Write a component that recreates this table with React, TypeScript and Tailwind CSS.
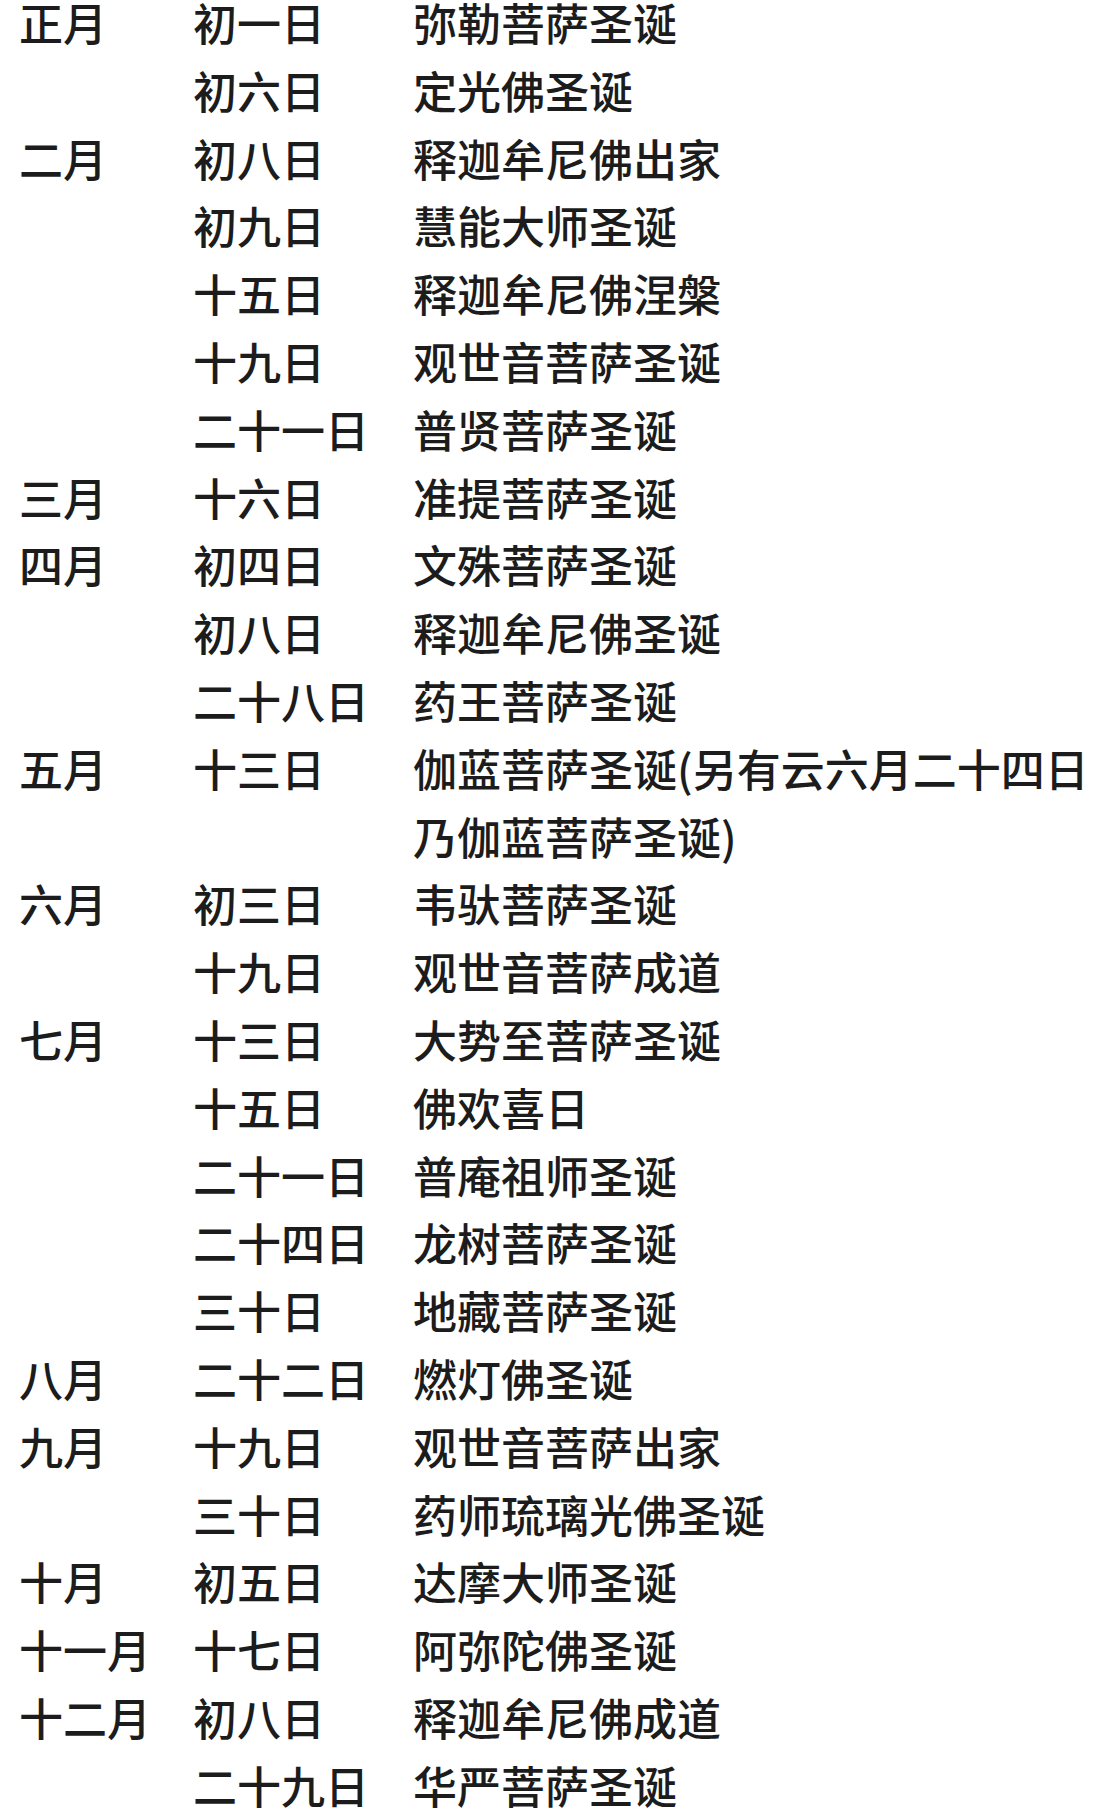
import React from "react";

type Row = { m?: string; d?: string; e: string };

const rows: Row[] = [
  { m: "正月", d: "初一日", e: "弥勒菩萨圣诞" },
  { d: "初六日", e: "定光佛圣诞" },
  { m: "二月", d: "初八日", e: "释迦牟尼佛出家" },
  { d: "初九日", e: "慧能大师圣诞" },
  { d: "十五日", e: "释迦牟尼佛涅槃" },
  { d: "十九日", e: "观世音菩萨圣诞" },
  { d: "二十一日", e: "普贤菩萨圣诞" },
  { m: "三月", d: "十六日", e: "准提菩萨圣诞" },
  { m: "四月", d: "初四日", e: "文殊菩萨圣诞" },
  { d: "初八日", e: "释迦牟尼佛圣诞" },
  { d: "二十八日", e: "药王菩萨圣诞" },
  { m: "五月", d: "十三日", e: "伽蓝菩萨圣诞(另有云六月二十四日" },
  { e: "乃伽蓝菩萨圣诞)" },
  { m: "六月", d: "初三日", e: "韦驮菩萨圣诞" },
  { d: "十九日", e: "观世音菩萨成道" },
  { m: "七月", d: "十三日", e: "大势至菩萨圣诞" },
  { d: "十五日", e: "佛欢喜日" },
  { d: "二十一日", e: "普庵祖师圣诞" },
  { d: "二十四日", e: "龙树菩萨圣诞" },
  { d: "三十日", e: "地藏菩萨圣诞" },
  { m: "八月", d: "二十二日", e: "燃灯佛圣诞" },
  { m: "九月", d: "十九日", e: "观世音菩萨出家" },
  { d: "三十日", e: "药师琉璃光佛圣诞" },
  { m: "十月", d: "初五日", e: "达摩大师圣诞" },
  { m: "十一月", d: "十七日", e: "阿弥陀佛圣诞" },
  { m: "十二月", d: "初八日", e: "释迦牟尼佛成道" },
  { d: "二十九日", e: "华严菩萨圣诞" },
];

export default function App() {
  return (
    <div className="w-[1093px] h-[1810px] overflow-hidden bg-white">
      <div
        className="pl-[19px] grid grid-cols-[174px_220px_1fr] auto-rows-[67.8px] text-[44px] leading-[44px] font-medium text-[#1c1c1c] whitespace-nowrap"
        style={{ fontFamily: '"Noto Sans CJK SC", "Noto Sans CJK TC", sans-serif' }}
      >
        {rows.map((r, i) => (
          <React.Fragment key={i}>
            <div>{r.m ?? ""}</div>
            <div>{r.d ?? ""}</div>
            <div>{r.e}</div>
          </React.Fragment>
        ))}
      </div>
    </div>
  );
}
